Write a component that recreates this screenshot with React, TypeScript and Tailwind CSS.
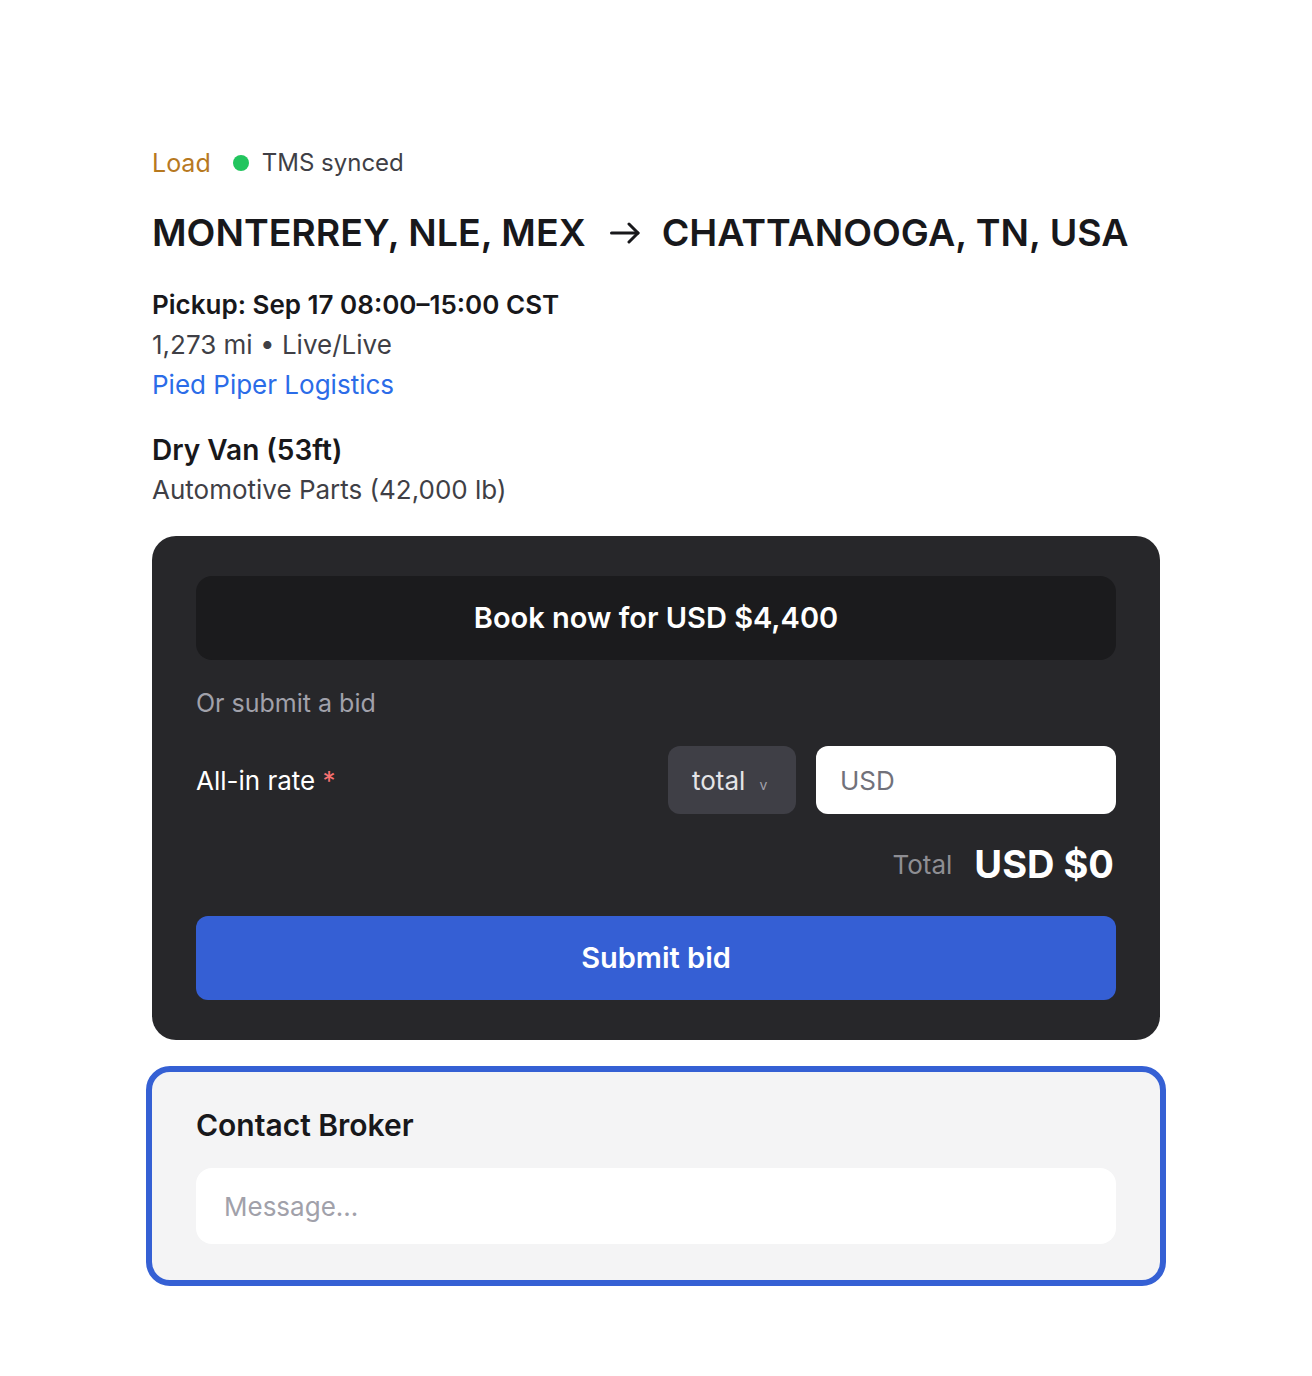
import React from 'react';

const font = { fontFamily: 'Inter, "Noto Sans", sans-serif' };

const App: React.FC = () => {
  return (
    <div className="min-h-[1376px] w-full bg-white" style={font}>
      <div className="ml-[152px] w-[1008px] pt-[147px] pb-[90px]">
        {/* Status row */}
        <div className="flex items-center text-[24px] leading-[32px]">
          <span className="text-[25px] text-[#b7791f]">Load</span>
          <span className="ml-[22px] h-[16px] w-[16px] rounded-full bg-[#22c55e]" />
          <span className="ml-[13px] text-[#3f3f46]">TMS synced</span>
        </div>

        {/* Route */}
        <div className="mt-[30px] flex items-center whitespace-nowrap text-[37.5px] font-semibold leading-[48px] text-[#18181b]">
          <span>MONTERREY, NLE, MEX</span>
          <svg className="ml-[24px] mr-[22px] shrink-0" width="30" height="22" viewBox="0 0 30 22" fill="none" stroke="#18181b" strokeWidth="3" strokeLinecap="round" strokeLinejoin="round">
            <path d="M1.5 11H28" />
            <path d="M19 2l9 9-9 9" />
          </svg>
          <span>CHATTANOOGA, TN, USA</span>
        </div>

        {/* Pickup details */}
        <div className="mt-[28px] text-[26px] leading-[40px]">
          <div className="font-semibold text-[#18181b]">Pickup: Sep 17 08:00–15:00 CST</div>
          <div className="text-[#3f3f46]">1,273 mi • Live/Live</div>
          <div className="text-[#2b6ce8]">Pied Piper Logistics</div>
        </div>

        <div className="mt-[25px] text-[26px] leading-[40px]">
          <div className="text-[28px] font-semibold text-[#18181b]">Dry Van (53ft)</div>
          <div className="text-[#3f3f46]">Automotive Parts (42,000 lb)</div>
        </div>

        {/* Booking card */}
        <div className="mt-[26px] rounded-[24px] bg-[#27272a] px-[44px] pt-[40px] pb-[40px]">
          <button className="flex h-[84px] w-full items-center justify-center rounded-[16px] bg-[#1b1b1d] text-[29px] font-semibold text-white">
            Book now for USD $4,400
          </button>

          <div className="mt-[27px] text-[25px] leading-[32px] text-[#a1a1aa]">Or submit a bid</div>

          <div className="mt-[27px] flex items-center">
            <div className="flex-1 text-[26px] text-white">
              All-in rate <span className="text-[#f87171]">*</span>
            </div>
            <div className="flex h-[68px] w-[128px] items-center rounded-[12px] bg-[#3f3f46] pl-[24px] text-[26px] text-[#e4e4e7]">
              total
              <span className="ml-[14px] mt-[8px] text-[14px] text-[#a1a1aa]">v</span>
            </div>
            <div className="ml-[20px] flex h-[68px] w-[300px] items-center rounded-[12px] bg-white pl-[24px] text-[26px] text-[#71717a]">
              USD
            </div>
          </div>

          <div className="mt-[26px] flex h-[48px] items-center justify-end leading-[48px]">
            <span className="mt-[2px] text-[26px] text-[#8e8e93]">Total</span>
            <span className="ml-[22px] mr-[2px] text-[38px] font-bold text-white">USD $0</span>
          </div>

          <button className="mt-[28px] flex h-[84px] w-full items-center justify-center rounded-[12px] bg-[#355fd4] text-[29px] font-semibold text-white">
            Submit bid
          </button>
        </div>

        {/* Contact broker */}
        <div className="mt-[32px] rounded-[18px] bg-[#f4f4f5] px-[44px] pt-[33px] pb-[36px] outline-[6px] outline-solid outline-[#3560d4]">
          <div className="text-[30px] font-semibold leading-[40px] text-[#18181b]">Contact Broker</div>
          <div className="mt-[23px] flex h-[76px] items-center rounded-[16px] bg-white pl-[28px] text-[26px] text-[#a1a1aa]">
            Message...
          </div>
        </div>
      </div>
    </div>
  );
};

export default App;
